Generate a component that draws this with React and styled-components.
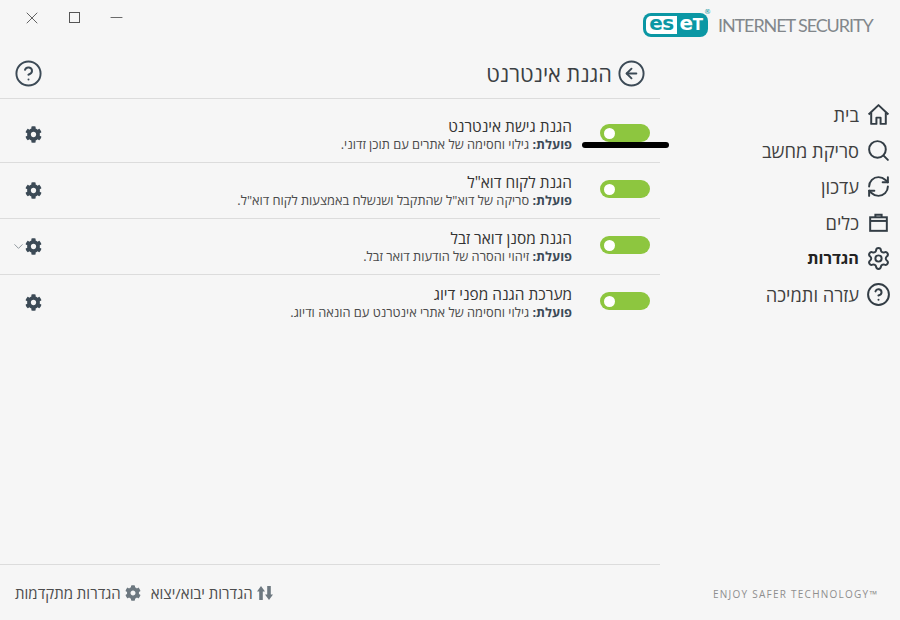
import React from "react";
import styled, { createGlobalStyle } from "styled-components";
import { X, Minus, Search, RefreshCw, Settings, CircleHelp, CircleArrowLeft, ChevronDown } from "lucide-react";
import { FaCog } from "react-icons/fa";

const Global = createGlobalStyle`
  html, body { margin: 0; padding: 0; background: #f6f6f6; }
  * { box-sizing: border-box; }
  body { font-family: "Open Sans", "Liberation Sans", "DejaVu Sans", sans-serif; }
`;

const Page = styled.div`
  position: relative;
  width: 900px;
  height: 620px;
  display: flex;
  background: #f6f6f6;
  overflow: hidden;
`;

const Main = styled.main`
  width: 660px;
  display: flex;
  flex-direction: column;
`;

const WindowBar = styled.div`
  height: 50px;
  display: flex;
  align-items: flex-start;
  padding: 10px 0 0 22px;
  gap: 22px;
  color: #444;
`;

const WindowButton = styled.div`
  width: 20px;
  height: 15px;
  display: flex;
  align-items: center;
  justify-content: center;
`;

const MaxBox = styled.div`
  width: 11px;
  height: 11px;
  border: 1px solid #555;
`;

const Header = styled.header`
  height: 49px;
  display: flex;
  align-items: center;
  justify-content: space-between;
  padding: 0 14px 1px 14px;
  border-bottom: 1px solid #dcdcdc;
  color: #3c4a56;
`;

const Title = styled.div`
  display: flex;
  align-items: center;
  gap: 5px;
  font-size: 21.7px;
  color: #3b3f43;
  direction: rtl;
`;

const List = styled.div`
  flex: 1;
  display: flex;
  flex-direction: column;
`;

const Row = styled.div`
  height: ${(p) => (p.$first ? 64 : 56)}px;
  padding-top: ${(p) => (p.$first ? 25 : 17)}px;
  display: flex;
  align-items: flex-start;
  border-bottom: ${(p) => (p.$last ? "none" : "1px solid #dcdcdc")};
`;

const RowTools = styled.div`
  width: 42px;
  height: 18px;
  margin-top: 1px;
  display: flex;
  align-items: center;
  justify-content: flex-end;
  color: #3c4a56;
  position: relative;
`;

const Chevron = styled.span`
  position: absolute;
  left: 11px;
  top: 2px;
  color: #6f7a82;
  display: flex;
`;

const RowText = styled.div`
  flex: 1;
  direction: rtl;
  margin-top: -7px;
  padding-right: 28px;
  text-align: right;
`;

const RowTitle = styled.div`
  font-size: 15.4px;
  line-height: 19px;
  color: #333;
`;

const RowDesc = styled.div`
  font-size: 12.8px;
  line-height: 16px;
  color: #4a4a4a;
  b { font-weight: 700; color: #3c4a56; }
`;

const Toggle = styled.div`
  width: 50px;
  height: 18px;
  margin-right: 10px;
  padding-left: 4px;
  border-radius: 9px;
  background: #8dc63f;
  display: flex;
  align-items: center;
`;

const Knob = styled.div`
  width: 11px;
  height: 11px;
  border-radius: 50%;
  background: #fff;
`;

const Footer = styled.footer`
  height: 56px;
  border-top: 1px solid #dcdcdc;
  display: flex;
  align-items: flex-start;
  padding: 18px 0 0 15px;
  gap: 10px;
`;

const FooterLink = styled.div`
  display: flex;
  align-items: center;
  gap: 4px;
  direction: rtl;
  font-size: 15px;
  line-height: 20px;
  color: #4d4d4d;
  svg { color: #6d7880; }
`;

const Side = styled.aside`
  width: 240px;
  display: flex;
  flex-direction: column;
`;

const Brand = styled.div`
  height: 96px;
  display: flex;
  align-items: flex-start;
  padding-top: 13px;
  gap: 10px;
  margin-left: -17px;
`;

const Logo = styled.div`
  position: relative;
  flex: none;
  width: 65px;
  height: 24px;
  border-radius: 8px;
  background: #0b97a4;
  display: flex;
  padding: 3px;
  font-family: "DejaVu Sans", sans-serif;
  font-weight: 700;
  font-size: 20px;
  line-height: 15px;
`;

const LogoInner = styled.span`
  width: 31px;
  height: 18px;
  background: #fff;
  color: #0b97a4;
  border-radius: 5px 0 0 5px;
  text-align: center;
  letter-spacing: -0.5px;
`;

const LogoRest = styled.span`
  flex: 1;
  color: #fff;
  text-align: center;
  letter-spacing: -0.5px;
`;

const LogoT = styled.span`
  font-size: 15px;
`;

const Registered = styled.span`
  position: absolute;
  right: -3px;
  top: -5px;
  font-size: 7px;
  line-height: 8px;
  font-weight: 400;
  color: #0b97a4;
`;

const Product = styled.div`
  font-family: "Lato", "Open Sans", sans-serif;
  font-size: 18px;
  line-height: 24px;
  color: #82878b;
  white-space: nowrap;
  letter-spacing: -1.1px;
`;

const Nav = styled.nav`
  flex: 1;
  display: flex;
  flex-direction: column;
`;

const NavItem = styled.div`
  height: 36px;
  display: flex;
  align-items: center;
  direction: rtl;
  padding-right: 9px;
  gap: 7px;
  font-size: ${(p) => (p.$active ? 16.2 : 18.3)}px;
  font-weight: ${(p) => (p.$active ? 700 : 400)};
  color: ${(p) => (p.$active ? "#222" : "#3f3f3f")};
  svg { color: #333d45; flex: none; }
`;

const Tagline = styled.div`
  height: 51px;
  padding: 18px 0 0 53px;
  font-size: 10px;
  line-height: 14px;
  letter-spacing: 1.25px;
  color: #8e8e8e;
  white-space: nowrap;
  font-family: "Open Sans", sans-serif;
`;

const Redaction = styled.div`
  position: absolute;
  left: 582px;
  top: 142px;
  width: 87px;
  height: 6px;
  border-radius: 3px;
  background: #000;
`;

const ImportExportIcon = () => (
  <svg width="16" height="16" viewBox="0 0 16 16" fill="currentColor">
    <path d="M4 1 8 6.500H5.800V15H2.200V6.500H0Z" />
    <path d="M12 15 16 9.500h-2.200V1h-3.600v8.500H8Z" />
  </svg>
);

const HomeIcon = ({ size, strokeWidth }) => (
  <svg width={size} height={size} viewBox="0 0 24 24" fill="none" stroke="currentColor" strokeWidth={strokeWidth} strokeLinejoin="round">
    <path d="M2.500 12 12 3l9.500 9" />
    <path d="M5 10v11h5v-6h4v6h5V10" />
  </svg>
);

const ToolsIcon = ({ size, strokeWidth }) => (
  <svg width={size} height={size} viewBox="0 0 24 24" fill="none" stroke="currentColor" strokeWidth={strokeWidth}>
    <rect x="4" y="7" width="16" height="13" />
    <path d="M4 10.500h16" />
    <path d="M9 7V4.500h6V7" />
  </svg>
);

const rows = [
  { title: "הגנת גישת אינטרנט", desc: "גילוי וחסימה של אתרים עם תוכן זדוני." },
  { title: 'הגנת לקוח דוא"ל', desc: 'סריקה של דוא"ל שהתקבל ושנשלח באמצעות לקוח דוא"ל.' },
  { title: "הגנת מסנן דואר זבל", desc: "זיהוי והסרה של הודעות דואר זבל.", chevron: true },
  { title: "מערכת הגנה מפני דיוג", desc: "גילוי וחסימה של אתרי אינטרנט עם הונאה ודיוג." },
];

const navItems = [
  { label: "בית", icon: HomeIcon },
  { label: "סריקת מחשב", icon: Search },
  { label: "עדכון", icon: RefreshCw },
  { label: "כלים", icon: ToolsIcon },
  { label: "הגדרות", icon: Settings, active: true },
  { label: "עזרה ותמיכה", icon: CircleHelp },
];

export default function App() {
  return (
    <Page>
      <Global />
      <Main>
        <WindowBar>
          <WindowButton><X size={24} strokeWidth={1} /></WindowButton>
          <WindowButton><MaxBox /></WindowButton>
          <WindowButton><Minus size={19} strokeWidth={1} /></WindowButton>
        </WindowBar>
        <Header>
          <CircleHelp size={29} strokeWidth={1.6} />
          <Title>
            <CircleArrowLeft size={29} strokeWidth={1.6} color="#3c4a56" />
            הגנת אינטרנט
          </Title>
        </Header>
        <List>
          {rows.map((row, i) => (
            <Row key={row.title} $first={i === 0} $last={i === rows.length - 1}>
              <RowTools>
                {row.chevron && (
                  <Chevron><ChevronDown size={15} strokeWidth={1.2} /></Chevron>
                )}
                <FaCog size={17} />
              </RowTools>
              <RowText>
                <RowTitle>{row.title}</RowTitle>
                <RowDesc><b>פועלת:</b> {row.desc}</RowDesc>
              </RowText>
              <Toggle><Knob /></Toggle>
            </Row>
          ))}
        </List>
        <Footer>
          <FooterLink><FaCog size={16} />הגדרות מתקדמות</FooterLink>
          <FooterLink><ImportExportIcon />הגדרות יבוא/יצוא</FooterLink>
        </Footer>
      </Main>
      <Side>
        <Brand>
          <Logo>
            <LogoInner>es</LogoInner>
            <LogoRest>e<LogoT>T</LogoT></LogoRest>
            <Registered>®</Registered>
          </Logo>
          <Product>INTERNET SECURITY</Product>
        </Brand>
        <Nav>
          {navItems.map((item) => (
            <NavItem key={item.label} $active={item.active}>
              <item.icon size={25} strokeWidth={1.9} />
              {item.label}
            </NavItem>
          ))}
        </Nav>
        <Tagline>ENJOY SAFER TECHNOLOGY™</Tagline>
      </Side>
      <Redaction />
    </Page>
  );
}
